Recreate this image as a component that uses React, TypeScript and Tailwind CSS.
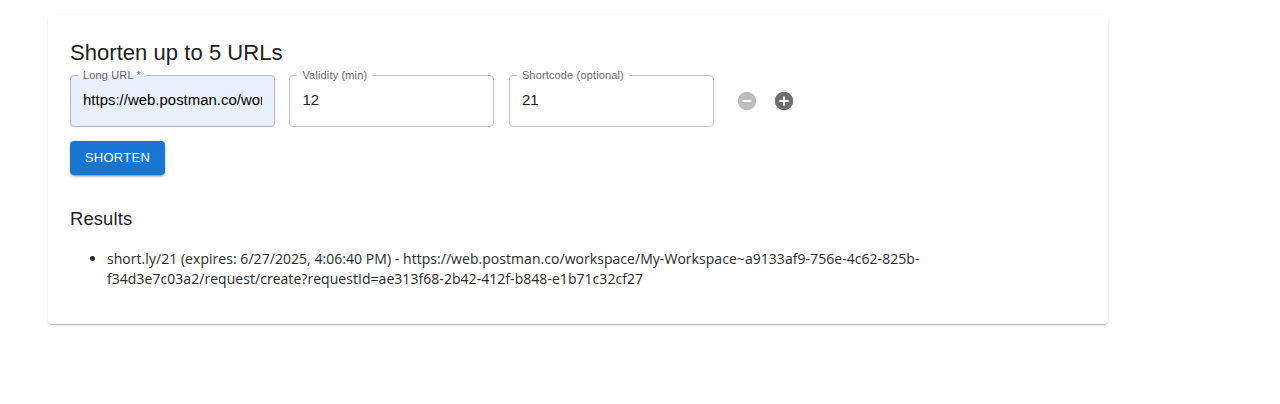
import React from "react";

type FieldProps = { label: string; value: string; filled?: boolean };

function Field({ label, value, filled }: FieldProps) {
  return (
    <fieldset
      className={`h-[57px] w-[205px] rounded-[4px] border px-[7px] ${filled ? "border-[#b1b7c3] bg-[#e8f0fe]" : "border-[#c4c4c4] bg-white"}`}
    >
      <legend className="h-[11px] px-[5px] text-[11px] leading-[11px] tracking-[0.15px] text-[#666]">{label}</legend>
      <div
        className={`ml-[5px] mt-[9px] w-[179px] overflow-hidden whitespace-nowrap text-[14.9px] leading-[20px] tracking-[0.03px] ${filled ? "text-black" : "text-[#212121]"}`}
      >
        {value}
      </div>
    </fieldset>
  );
}

function RoundIcon({ plus }: { plus?: boolean }) {
  return (
    <svg viewBox="0 0 24 24" className={`size-[22px] ${plus ? "fill-[#6f6f6f]" : "fill-[#bdbdbd]"}`}>
      <path
        d={
          plus
            ? "M12 2C6.48 2 2 6.48 2 12s4.48 10 10 10 10-4.48 10-10S17.52 2 12 2m5 11h-4v4h-2v-4H7v-2h4V7h2v4h4z"
            : "M12 2C6.48 2 2 6.48 2 12s4.48 10 10 10 10-4.48 10-10S17.52 2 12 2m5 11H7v-2h10z"
        }
      />
    </svg>
  );
}

export default function App() {
  return (
    <main className="h-[404px] bg-white pl-[48px] pt-[15px] font-['Liberation_Sans',Arial,sans-serif] text-[#212121]">
      <section className="h-[309px] w-[1060px] rounded-[4px] bg-white px-[22px] pt-[23px] shadow-[0_2px_1px_-1px_rgba(0,0,0,0.12),0_1px_1px_0_rgba(0,0,0,0.12),0_1px_3px_0_rgba(0,0,0,0.1)]">
        <h1 className="h-[32px] text-[22px] leading-[30px] tracking-[0.05px]">Shorten up to 5 URLs</h1>
        <div className="flex h-[57px] gap-[14.45px]">
          <Field label="Long URL *" value="https://web.postman.co/workspace" filled />
          <Field label="Validity (min)" value="12" />
          <Field label="Shortcode (optional)" value="21" />
          <div className="ml-[7.6px] flex items-center gap-[15px] pt-[5px]">
            <button><RoundIcon /></button>
            <button><RoundIcon plus /></button>
          </div>
        </div>
        <button className="mt-[14px] h-[33.5px] w-[95px] rounded-[4px] bg-[#1976d2] pb-px text-[13px] tracking-[0.3px] text-white shadow-[0_3px_1px_-2px_rgba(0,0,0,0.2),0_2px_2px_0_rgba(0,0,0,0.14),0_1px_5px_0_rgba(0,0,0,0.12)]">
          SHORTEN
        </button>
        <h2 className="mt-[29.5px] text-[18.4px] leading-[30px] tracking-[0.14px]">Results</h2>
        <ul className="mt-[15px] list-disc pl-[37px] font-['Open_Sans','Noto_Sans',sans-serif] text-[14px] leading-[20px] tracking-[0.045px] text-[#292929]">
          <li>
            short.ly/21 (expires: 6/27/2025, 4:06:40 PM) - https://web.postman.co/workspace/My-Workspace~a9133af9-756e-4c62-825b-
            <br />
            f34d3e7c03a2/request/create?requestId=ae313f68-2b42-412f-b848-e1b71c32cf27
          </li>
        </ul>
      </section>
    </main>
  );
}
